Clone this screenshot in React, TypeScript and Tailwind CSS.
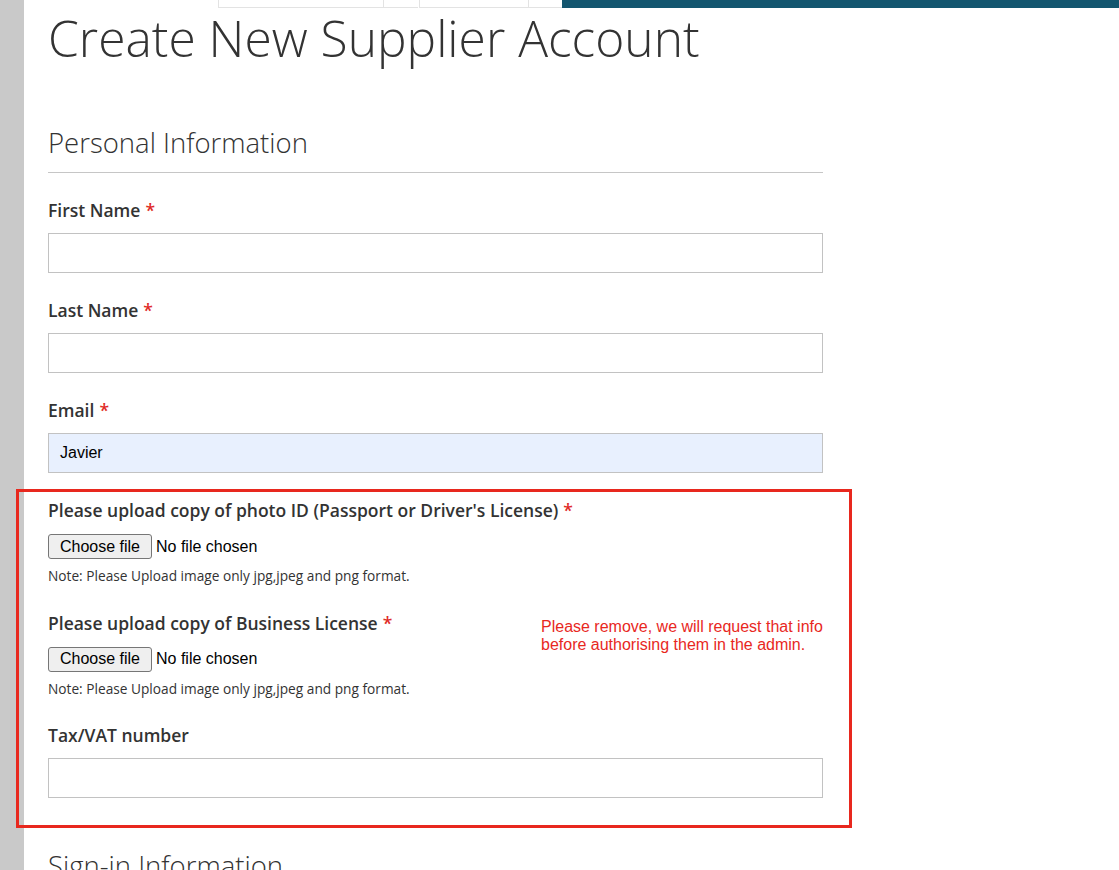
import React from "react";

const sans = "font-['Open_Sans',sans-serif]";
const arial = "font-['Liberation_Sans',Arial,sans-serif]";

function Label({ text, required }: { text: string; required?: boolean }) {
  return (
    <div className={`${sans} text-[17.5px] leading-[24px] font-semibold text-[#333]`}>
      {text}
      {required && <span className="ml-[5px] text-[#e02b27]">*</span>}
    </div>
  );
}

function TextField({
  label,
  required,
  value,
  autofill,
}: {
  label: string;
  required?: boolean;
  value?: string;
  autofill?: boolean;
}) {
  return (
    <div className="flex flex-col">
      <Label text={label} required={required} />
      <div
        className={`mt-[11px] h-[40px] border border-[#c2c2c2] flex items-center px-[11px] ${arial} text-[16px] text-black ${
          autofill ? "bg-[#e8f0fe]" : "bg-white"
        }`}
      >
        {value}
      </div>
    </div>
  );
}

function FileField({ label }: { label: string }) {
  return (
    <div className="flex flex-col">
      <Label text={label} required />
      <div className={`mt-[12px] flex items-center ${arial} text-[16px] text-black`}>
        <span className="h-[25px] w-[104px] flex items-center justify-center border border-[#767676] rounded-[3px] bg-[#efefef]">
          Choose file
        </span>
        <span className="ml-[4px]">No file chosen</span>
      </div>
      <div className={`mt-[7px] ${sans} text-[13.7px] leading-[19.5px] text-[#333]`}>
        Note: Please Upload image only jpg,jpeg and png format.
      </div>
    </div>
  );
}

export default function App() {
  return (
    <div className="relative flex h-[870px] overflow-hidden bg-white">
      <div className="w-[24px] shrink-0 bg-[#c9c9c9]" />
      <div className="flex-1 flex flex-col">
        <div className="flex h-[8px] shrink-0">
          <div className="w-[194px]" />
          <div className="w-[165px] border-l border-b border-[#e3e3e3]" />
          <div className="w-[35px] border-l border-b border-[#e3e3e3]" />
          <div className="w-[109px] border-l border-b border-[#e3e3e3] ml-[1px]" />
          <div className="w-[34px] border-l border-b border-[#e3e3e3]" />
          <div className="flex-1 bg-[#13566f]" />
        </div>

        <div className="pl-[24px] w-[799px]">
          <h1 className={`${sans} text-[49.7px] leading-[60px] font-light text-[#333]`}>
            Create New Supplier Account
          </h1>

          <div
            className={`mt-[58px] pb-[12px] border-b border-[#c6c6c6] ${sans} text-[27.5px] leading-[34px] font-light text-[#333]`}
          >
            Personal Information
          </div>

          <div className="mt-[25px] flex flex-col gap-[25px]">
            <TextField label="First Name" required />
            <TextField label="Last Name" required />
            <TextField label="Email" required value="Javier" autofill />
            <FileField label="Please upload copy of photo ID (Passport or Driver's License)" />
            <FileField label="Please upload copy of Business License" />
            <TextField label="Tax/VAT number" />
          </div>

          <div className={`mt-[51px] ${sans} text-[27.5px] leading-[34px] font-light text-[#333]`}>
            Sign-in Information
          </div>
        </div>
      </div>

      {/* review annotation drawn over the form */}
      <div className="absolute left-[16px] top-[489px] w-[836px] h-[339px] border-[3px] border-[#e8281e] pointer-events-none" />
      <div
        className={`absolute left-[541px] top-[618px] ${arial} text-[16px] leading-[18px] text-[#e8281e]`}
      >
        Please remove, we will request that info
        <br />
        before authorising them in the admin.
      </div>
    </div>
  );
}
